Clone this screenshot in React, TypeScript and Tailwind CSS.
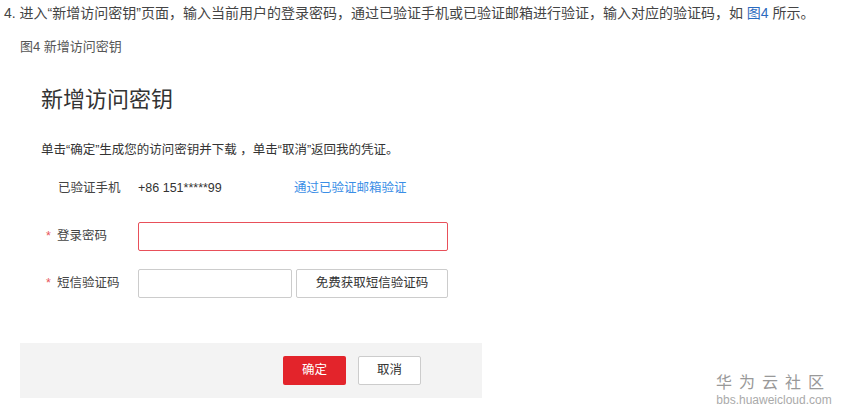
import React from 'react';

const font = "font-['Liberation_Sans','Noto_Sans_CJK_SC',sans-serif]";

const App: React.FC = () => {
    return (
        <div className={`relative w-[841px] h-[413px] bg-white text-[#333] ${font}`}>
            <p className="pl-[4px] pt-[4px] text-[14px] leading-[18px] text-[#444]">
                4. 进入“新增访问密钥”页面，输入当前用户的登录密码，通过已验证手机或已验证邮箱进行验证，输入对应的验证码，如 <span className="text-[#2a6bc0]">图4</span> 所示。
            </p>
            <p className="pl-[20px] mt-[16px] text-[13px] leading-[18px] text-[#555]">图4 新增访问密钥</p>

            <div className="ml-[20px] mt-[30px] w-[462px]">
                <div className="pl-[21px]">
                    <h2 className="text-[22px] leading-[28px] text-[#333]">新增访问密钥</h2>
                    <p className="mt-[28px] text-[12.5px] leading-[16px] text-[#333]">单击“确定”生成您的访问密钥并下载 ，单击“取消”返回我的凭证。</p>

                    <div className="mt-[22px] flex items-center text-[12.5px] h-[16px]">
                        <span className="w-[97px] pl-[17px] text-[#444]">已验证手机</span>
                        <span className="w-[156px]">+86 151*****99</span>
                        <span className="text-[#3a8ee6]">通过已验证邮箱验证</span>
                    </div>

                    <div className="mt-[26px] flex items-center h-[28px]">
                        <span className="w-[97px] pl-[5px] text-[12.5px] text-[#444]"><span className="text-[#e8565a] mr-[6px]">*</span>登录密码</span>
                        <div className="w-[310px] h-[29px] border border-[#e8505a] rounded-[2px]" />
                    </div>

                    <div className="mt-[19px] flex items-center h-[28px]">
                        <span className="w-[97px] pl-[5px] text-[12.5px] text-[#444]"><span className="text-[#e8565a] mr-[6px]">*</span>短信验证码</span>
                        <div className="w-[154px] h-[29px] border border-[#ccc] rounded-[2px]" />
                        <button className="ml-[4px] w-[152px] h-[29px] border border-[#ccc] rounded-[2px] text-[12.5px] text-[#333] bg-white">免费获取短信验证码</button>
                    </div>
                </div>

                <div className="mt-[46px] h-[55px] bg-[#f3f3f3] flex items-center pl-[263px] gap-[12px]">
                    <button className="w-[63px] h-[29px] bg-[#e3242b] text-white text-[12.5px] rounded-[2px]">确定</button>
                    <button className="w-[63px] h-[29px] bg-white border border-[#ccc] text-[#333] text-[12.5px] rounded-[2px]">取消</button>
                </div>
            </div>

            <div className="absolute left-[716px] top-[373px] flex flex-col items-center text-[#999]">
                <span className="text-[16px] leading-[20px] tracking-[7px] pr-[1px]">华为云社区</span>
                <span className="text-[12px] leading-[14px] text-[#aaa]">bbs.huaweicloud.com</span>
            </div>
        </div>
    );
};

export default App;
